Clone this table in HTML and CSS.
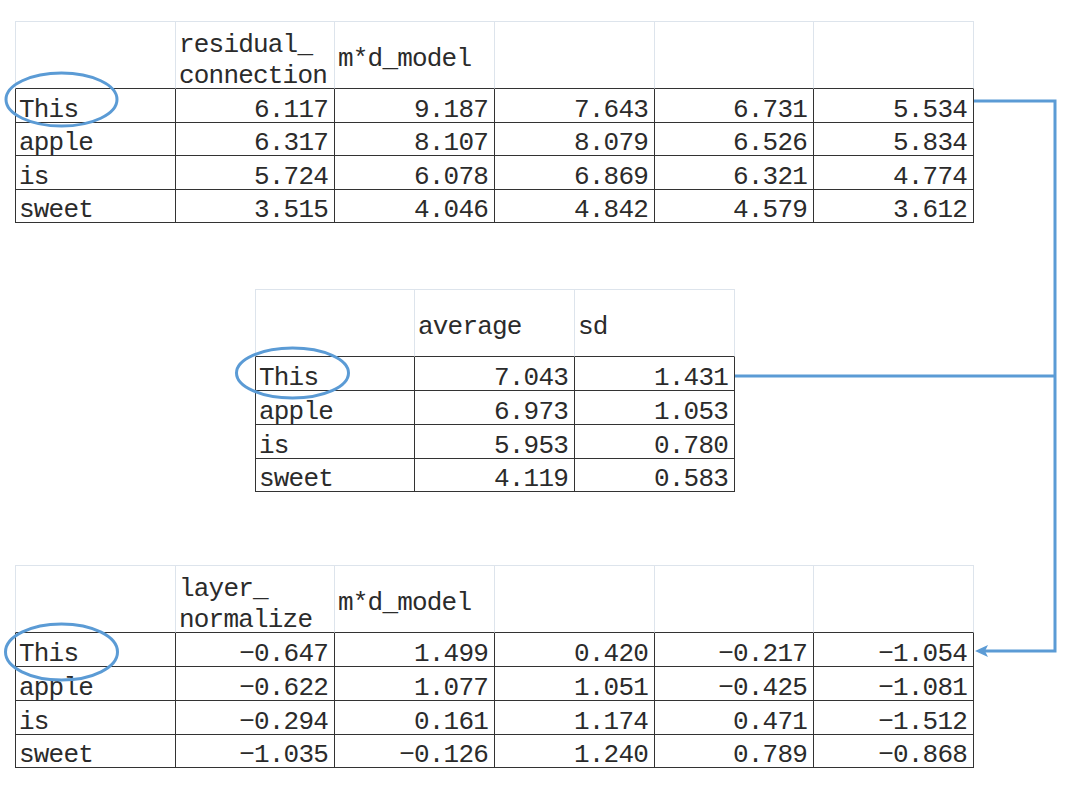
FILE: index.html
```html
<!DOCTYPE html>
<html>
<head>
<meta charset="utf-8">
<link rel="stylesheet" href="styles.css">
</head>
<body>
<div class="page">
  <div class="sheet wide">
    <div class="c h first"><span></span></div>
    <div class="c h h2"><span>residual_<br>connection</span></div>
    <div class="c h"><span>m*d_model</span></div>
    <div class="c h"><span></span></div>
    <div class="c h"><span></span></div>
    <div class="c h"><span></span></div>

    <div class="c first"><span>This</span></div>
    <div class="c num"><span>6.117</span></div>
    <div class="c num"><span>9.187</span></div>
    <div class="c num"><span>7.643</span></div>
    <div class="c num"><span>6.731</span></div>
    <div class="c num"><span>5.534</span></div>

    <div class="c first"><span>apple</span></div>
    <div class="c num"><span>6.317</span></div>
    <div class="c num"><span>8.107</span></div>
    <div class="c num"><span>8.079</span></div>
    <div class="c num"><span>6.526</span></div>
    <div class="c num"><span>5.834</span></div>

    <div class="c first"><span>is</span></div>
    <div class="c num"><span>5.724</span></div>
    <div class="c num"><span>6.078</span></div>
    <div class="c num"><span>6.869</span></div>
    <div class="c num"><span>6.321</span></div>
    <div class="c num"><span>4.774</span></div>

    <div class="c first"><span>sweet</span></div>
    <div class="c num"><span>3.515</span></div>
    <div class="c num"><span>4.046</span></div>
    <div class="c num"><span>4.842</span></div>
    <div class="c num"><span>4.579</span></div>
    <div class="c num"><span>3.612</span></div>
  </div>

  <div class="sheet stats">
    <div class="c h first"><span></span></div>
    <div class="c h"><span>average</span></div>
    <div class="c h"><span>sd</span></div>

    <div class="c first"><span>This</span></div>
    <div class="c num"><span>7.043</span></div>
    <div class="c num"><span>1.431</span></div>

    <div class="c first"><span>apple</span></div>
    <div class="c num"><span>6.973</span></div>
    <div class="c num"><span>1.053</span></div>

    <div class="c first"><span>is</span></div>
    <div class="c num"><span>5.953</span></div>
    <div class="c num"><span>0.780</span></div>

    <div class="c first"><span>sweet</span></div>
    <div class="c num"><span>4.119</span></div>
    <div class="c num"><span>0.583</span></div>
  </div>

  <div class="sheet wide norm">
    <div class="c h first"><span></span></div>
    <div class="c h h2"><span>layer_<br>normalize</span></div>
    <div class="c h"><span>m*d_model</span></div>
    <div class="c h"><span></span></div>
    <div class="c h"><span></span></div>
    <div class="c h"><span></span></div>

    <div class="c first"><span>This</span></div>
    <div class="c num"><span>−0.647</span></div>
    <div class="c num"><span>1.499</span></div>
    <div class="c num"><span>0.420</span></div>
    <div class="c num"><span>−0.217</span></div>
    <div class="c num"><span>−1.054</span></div>

    <div class="c first"><span>apple</span></div>
    <div class="c num"><span>−0.622</span></div>
    <div class="c num"><span>1.077</span></div>
    <div class="c num"><span>1.051</span></div>
    <div class="c num"><span>−0.425</span></div>
    <div class="c num"><span>−1.081</span></div>

    <div class="c first"><span>is</span></div>
    <div class="c num"><span>−0.294</span></div>
    <div class="c num"><span>0.161</span></div>
    <div class="c num"><span>1.174</span></div>
    <div class="c num"><span>0.471</span></div>
    <div class="c num"><span>−1.512</span></div>

    <div class="c first"><span>sweet</span></div>
    <div class="c num"><span>−1.035</span></div>
    <div class="c num"><span>−0.126</span></div>
    <div class="c num"><span>1.240</span></div>
    <div class="c num"><span>0.789</span></div>
    <div class="c num"><span>−0.868</span></div>
  </div>

  <svg class="overlay" width="1080" height="790" viewBox="0 0 1080 790">
    <g fill="none" stroke="#5b9bd5" stroke-width="3">
      <ellipse cx="61.5" cy="99.5" rx="55.5" ry="26.5"/>
      <ellipse cx="292.5" cy="373" rx="56" ry="25"/>
      <ellipse cx="61.5" cy="652" rx="56" ry="28"/>
      <polyline points="974,101 1055,101 1055,651 984,651"/>
      <line x1="735" y1="376" x2="1055" y2="376"/>
    </g>
    <polygon points="975,651 988,645 985,651 988,657" fill="#5b9bd5"/>
  </svg>
</div>
</body>
</html>
```

FILE: styles.css
```css
html, body {
  margin: 0;
  padding: 0;
  background: #ffffff;
}

body {
  font-family: "Liberation Mono", "DejaVu Sans Mono", monospace;
  font-size: 26px;
  letter-spacing: -0.8px;
  color: #2b2b2b;
}

.page {
  position: relative;
  width: 1080px;
  height: 790px;
  padding-top: 21px;
  box-sizing: border-box;
  overflow: hidden;
}

.sheet {
  display: grid;
}

.wide {
  margin-left: 15px;
  grid-template-columns: 161px 159px 160px 160px 159px 160px;
  grid-template-rows: 68px 34px 33px 34px 33px;
}

.stats {
  margin-left: 255px;
  margin-top: 66px;
  grid-template-columns: 160px 160px 160px;
  grid-template-rows: 68px 34px 34px 34px 33px;
}

.norm {
  margin-top: 73px;
  grid-template-rows: 68px 34px 34px 34px 33px;
}

.c {
  box-sizing: border-box;
  border-right: 1px solid #333333;
  border-bottom: 1px solid #333333;
  display: flex;
  align-items: flex-end;
  padding: 0 3px;
  line-height: 24px;
  white-space: nowrap;
}

.c.first {
  border-left: 1px solid #333333;
}

.c.h {
  border-top: 1px solid #dde4ec;
  border-right-color: #dde4ec;
  border-bottom-color: #333333;
  align-items: flex-start;
  padding: 22px 3px 0;
  line-height: 31px;
}

.c.h.first {
  border-left-color: #dde4ec;
}

.c.h2 {
  padding-top: 8px;
  white-space: normal;
}

.num {
  justify-content: flex-end;
  padding-right: 6px;
}

.overlay {
  position: absolute;
  top: 0;
  left: 0;
  pointer-events: none;
}
```
